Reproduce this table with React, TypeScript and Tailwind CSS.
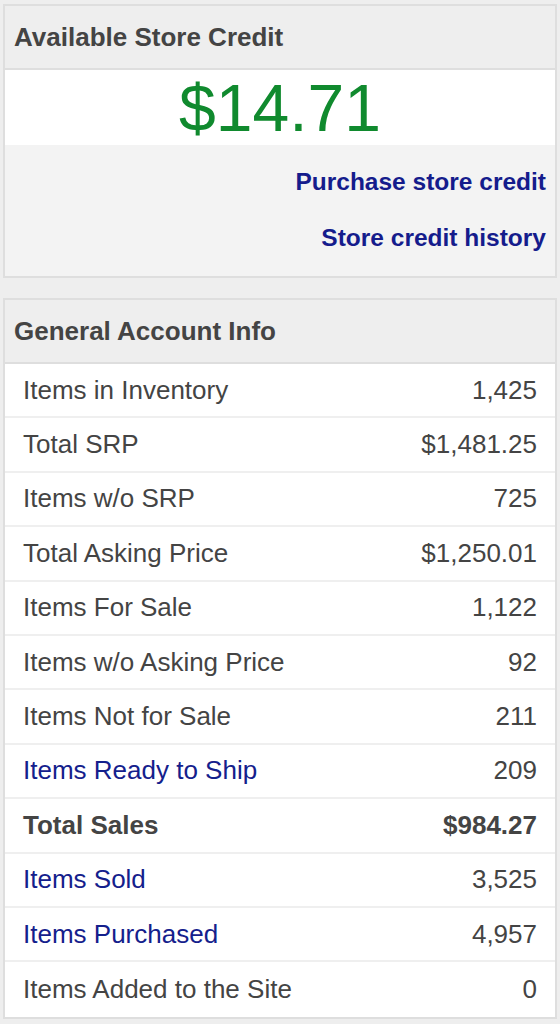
import React from 'react';

const rows = [
  { label: 'Items in Inventory', value: '1,425' },
  { label: 'Total SRP', value: '$1,481.25' },
  { label: 'Items w/o SRP', value: '725' },
  { label: 'Total Asking Price', value: '$1,250.01' },
  { label: 'Items For Sale', value: '1,122' },
  { label: 'Items w/o Asking Price', value: '92' },
  { label: 'Items Not for Sale', value: '211' },
  { label: 'Items Ready to Ship', value: '209', link: true },
  { label: 'Total Sales', value: '$984.27', bold: true },
  { label: 'Items Sold', value: '3,525', link: true },
  { label: 'Items Purchased', value: '4,957', link: true },
  { label: 'Items Added to the Site', value: '0' },
];

const App = () => {
  return (
    <div className="min-h-[1024px] bg-[#eeeeee] px-[3px] pt-[4px] [font-family:'Liberation_Sans',Arial,sans-serif] text-[#444]">
      {/* Store credit panel */}
      <div className="border-2 border-[#dedede] bg-[#f3f3f3]">
        <div className="flex h-[64px] items-center border-b-2 border-[#dedede] bg-[#eeeeee] pl-[9px]">
          <h2 className="text-[26px] font-bold text-[#444]">Available Store Credit</h2>
        </div>
        <div className="flex h-[75px] items-center justify-center bg-white">
          <span className="text-[66px] leading-none text-[#108a2e]">$14.71</span>
        </div>
        <div className="flex flex-col items-end gap-[29px] pb-[25px] pr-[9px] pt-[23px]">
          <a className="text-[24.5px] font-bold leading-[27px] text-[#151c8c]">Purchase store credit</a>
          <a className="text-[24.5px] font-bold leading-[27px] text-[#151c8c]">Store credit history</a>
        </div>
      </div>

      {/* General account info */}
      <div className="mt-[20px] border-2 border-[#dedede] bg-white">
        <div className="flex h-[64px] items-center border-b-2 border-[#dedede] bg-[#eeeeee] pl-[9px]">
          <h2 className="text-[26px] font-bold text-[#444]">General Account Info</h2>
        </div>
        {rows.map((row, i) => (
          <div
            key={row.label}
            className={`flex h-[54.4px] items-center justify-between pl-[18px] pr-[18px] text-[26px] ${
              i < rows.length - 1 ? 'border-b-2 border-[#efefef]' : ''
            } ${row.bold ? 'font-bold' : ''}`}
          >
            <span className={row.link ? 'text-[#14208c]' : 'text-[#444]'}>{row.label}</span>
            <span className="text-[#444]">{row.value}</span>
          </div>
        ))}
      </div>
    </div>
  );
};

export default App;
